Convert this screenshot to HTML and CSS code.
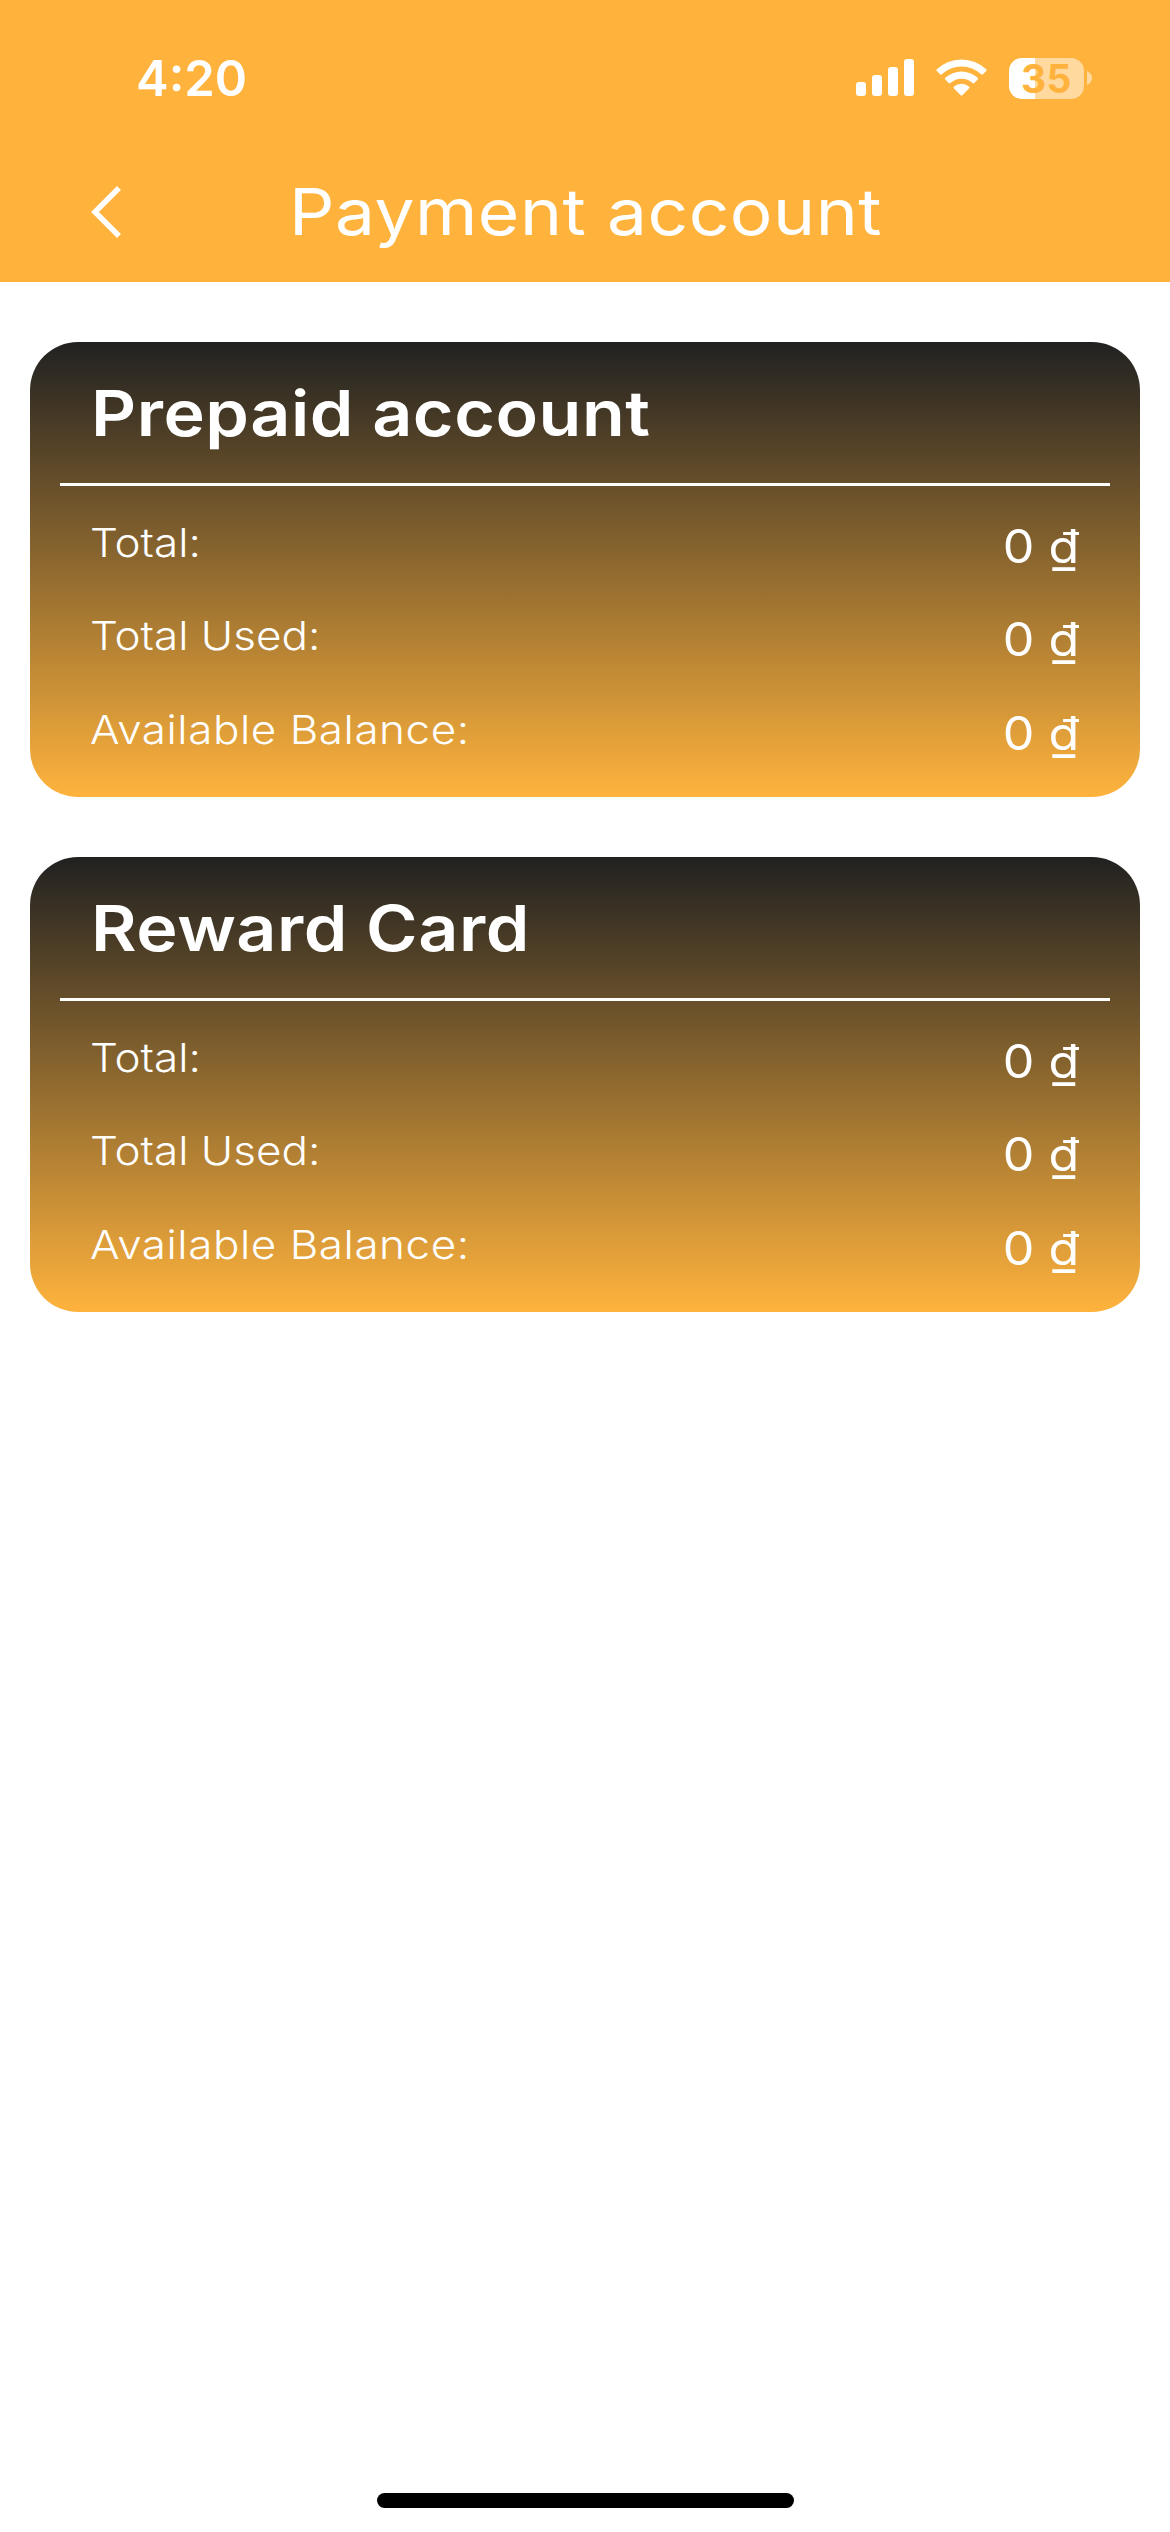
FILE: index.html
```html
<!DOCTYPE html>
<html lang="en">
<head>
<meta charset="utf-8">
<title>Payment account</title>
<link rel="stylesheet" href="styles.css">
</head>
<body>
<div class="screen">
  <header class="header">
    <div class="status">
      <span class="time">4:20</span>
      <div class="indicators">
        <svg class="signal" viewBox="0 0 58 38" fill="#fff">
          <rect x="0" y="23" width="10" height="14" rx="3"/>
          <rect x="16" y="16" width="10" height="21" rx="3"/>
          <rect x="32" y="8" width="10" height="29" rx="3"/>
          <rect x="48" y="0" width="10" height="37" rx="3"/>
        </svg>
        <svg class="wifi" viewBox="0 0 52 38" fill="#fff">
          <path d="M.8 10.2a36 36 0 0 1 49.400 0q.9.9 0 1.800l-3.300 3.300q-.8.8-1.700 0a28.500 28.500 0 0 0-39.400 0q-.9.8-1.700 0L.8 12q-.9-.9 0-1.800z"/>
          <path d="M9.300 18.800a24 24 0 0 1 32.400 0q.9.9 0 1.800l-3.400 3.400q-.8.8-1.700 0a16.500 16.500 0 0 0-22.200 0q-.9.8-1.700 0l-3.400-3.400q-.9-.9 0-1.800z"/>
          <path d="M18 27.500a12 12 0 0 1 15 0q1 .9 0 1.900l-6.700 6.900q-.8.8-1.600 0L18 29.400q-1-1 0-1.900z"/>
        </svg>
        <div class="battery"><span class="level">35</span></div>
        <svg class="tip" viewBox="0 0 5 14"><path d="M0 0Q5 2.500 5 7T0 14z" fill="#fff" opacity=".5"/></svg>
      </div>
    </div>
    <div class="nav">
      <svg class="back" viewBox="0 0 32 54"><path d="M29 3 5 27 29 51" fill="none" stroke="#fff" stroke-width="5.500"/></svg>
      <h1 class="title">Payment account</h1>
    </div>
  </header>
  <main class="cards">
    <section class="card">
      <h2 class="card-title"><span class="wide">Prepaid account</span></h2>
      <div class="rows">
        <div class="row"><span class="label total">Total:</span><span class="value">0 ₫</span></div>
        <div class="row"><span class="label used">Total Used:</span><span class="value">0 ₫</span></div>
        <div class="row"><span class="label balance">Available Balance:</span><span class="value">0 ₫</span></div>
      </div>
    </section>
    <section class="card">
      <h2 class="card-title"><span class="wide">Reward Card</span></h2>
      <div class="rows">
        <div class="row"><span class="label total">Total:</span><span class="value">0 ₫</span></div>
        <div class="row"><span class="label used">Total Used:</span><span class="value">0 ₫</span></div>
        <div class="row"><span class="label balance">Available Balance:</span><span class="value">0 ₫</span></div>
      </div>
    </section>
  </main>
  <div class="home"></div>
</div>
</body>
</html>
```
FILE: styles.css
```css
* { box-sizing: border-box; }
body { margin: 0; background: #fff; font-family: Inter, "Open Sans", sans-serif; color: #fff; }
h1, h2 { margin: 0; }
svg { display: block; flex: none; }
.screen { width: 1170px; height: 2532px; display: flex; flex-direction: column; align-items: center; }
.header { width: 100%; height: 282px; background: #ffb33d; }
.status { height: 141px; padding: 15px 78px 0 136px; display: flex; align-items: center; justify-content: space-between; }
.time { font-size: 49px; font-weight: 600; }
.indicators { display: flex; align-items: center; }
.signal { width: 58px; height: 38px; }
.wifi { width: 52px; height: 38px; margin-left: 22px; }
.battery { width: 75px; height: 41px; margin-left: 21px; border-radius: 13px; background: linear-gradient(90deg, #fff 26px, #ffd99d 26px); display: flex; align-items: center; justify-content: center; }
.level { font-size: 39px; font-weight: 700; line-height: 41px; letter-spacing: .5px; color: #ffb33d; }
.tip { width: 5px; height: 14px; margin-left: 3px; }
.nav { height: 141px; padding: 0 90px; display: grid; grid-template-columns: 32px 1fr 32px; align-items: center; }
.back { width: 32px; height: 54px; }
.title { padding-left: 1px; font-size: 64px; font-weight: 400; line-height: 141px; letter-spacing: .5px; text-align: center; white-space: nowrap; transform: scaleX(1.112); }
.cards { width: 100%; padding: 60px 30px; display: flex; flex-direction: column; gap: 60px; flex: 1; }
.card { height: 455px; border-radius: 48px; padding: 0 30px; background: linear-gradient(#212121, #ffb33d); }
.card-title { height: 144px; padding: 0 31px; border-bottom: 3px solid #fff; font-size: 63px; font-weight: 600; line-height: 142px; white-space: nowrap; }
/* Inter is stretched to a wide geometric set */
.wide { display: inline-block; transform: scaleX(1.11); transform-origin: left; letter-spacing: .5px; }
.rows { padding: 13px 30px 0; }
.row { height: 93.6px; display: flex; align-items: center; justify-content: space-between; }
.label { font-size: 40px; font-weight: 300; padding-bottom: 7px; transform: scaleX(1.1); transform-origin: left; }
.balance { letter-spacing: .5px; }
.value { margin-right: 1px; font-size: 46px; font-weight: 400; transform: scaleX(1.09); transform-origin: right; }
.home { width: 417px; height: 15px; margin-bottom: 24px; border-radius: 8px; background: #000; }
```
